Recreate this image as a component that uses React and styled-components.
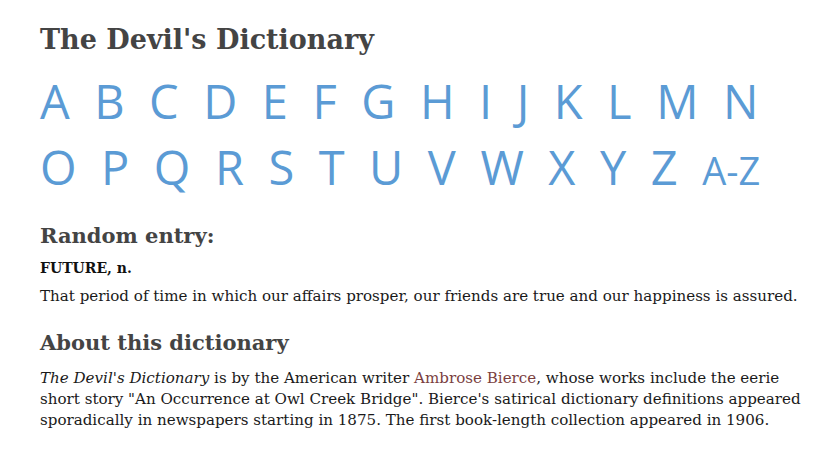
import React from 'react';
import styled, { createGlobalStyle } from 'styled-components';

const GlobalStyle = createGlobalStyle`
	html, body {
		margin: 0;
		padding: 0;
		background: #ffffff;
	}
	body {
		font-family: 'DejaVu Serif', 'Liberation Serif', serif;
		color: #1a1a1a;
	}
`;

const Page = styled.main`
	padding: 18px 30px 0 40px;
`;

const Title = styled.h1`
	margin: 0;
	font-size: 27px;
	font-weight: bold;
	color: #444444;
	line-height: 44px;
`;

const LetterNav = styled.nav`
	display: flex;
	flex-wrap: wrap;
	align-items: baseline;
	column-gap: 24.5px;
	width: 760px;
	margin-top: 6px;
`;

const Letter = styled.a`
	font-family: 'Open Sans', sans-serif;
	font-size: ${(props) => (props.small ? '38px' : '47px')};
	line-height: 66px;
	color: #5b9bd5;
	text-decoration: none;
`;

const SectionHeading = styled.h2`
	margin: 0;
	font-size: 21px;
	font-weight: bold;
	color: #444444;
	line-height: 30px;
`;

const Section = styled.section`
	margin-top: ${(props) => props.top || '0'};
`;

const Term = styled.div`
	font-size: 14px;
	font-weight: bold;
	margin-top: 6px;
	line-height: 22px;
	color: #111111;
`;

const Text = styled.p`
	margin: ${(props) => props.top || '7px'} 0 0 0;
	font-size: 15.1px;
	line-height: 21px;
`;

const Link = styled.a`
	color: #7b3f3f;
	text-decoration: none;
`;

const letters = 'ABCDEFGHIJKLMNOPQRSTUVWXYZ'.split('');

const App = () => {
	return (
		<>
			<GlobalStyle />
			<Page>
				<Title>The Devil's Dictionary</Title>
				<LetterNav>
					{letters.map((l) => (
						<Letter key={l} href="#">
							{l}
						</Letter>
					))}
					<Letter small href="#">
						A-Z
					</Letter>
				</LetterNav>
				<Section top="18px">
					<SectionHeading>Random entry:</SectionHeading>
					<Term>FUTURE, n.</Term>
					<Text>
						That period of time in which our affairs prosper, our friends are true and our
						happiness is assured.
					</Text>
				</Section>
				<Section top="21px">
					<SectionHeading>About this dictionary</SectionHeading>
					<Text top="10px">
						<i>The Devil's Dictionary</i> is by the American writer{' '}
						<Link href="#">Ambrose Bierce</Link>, whose works include the eerie short story
						"An Occurrence at Owl Creek Bridge". Bierce's satirical dictionary definitions
						appeared sporadically in newspapers starting in 1875. The first book-length
						collection appeared in 1906.
					</Text>
				</Section>
			</Page>
		</>
	);
};

export default App;
